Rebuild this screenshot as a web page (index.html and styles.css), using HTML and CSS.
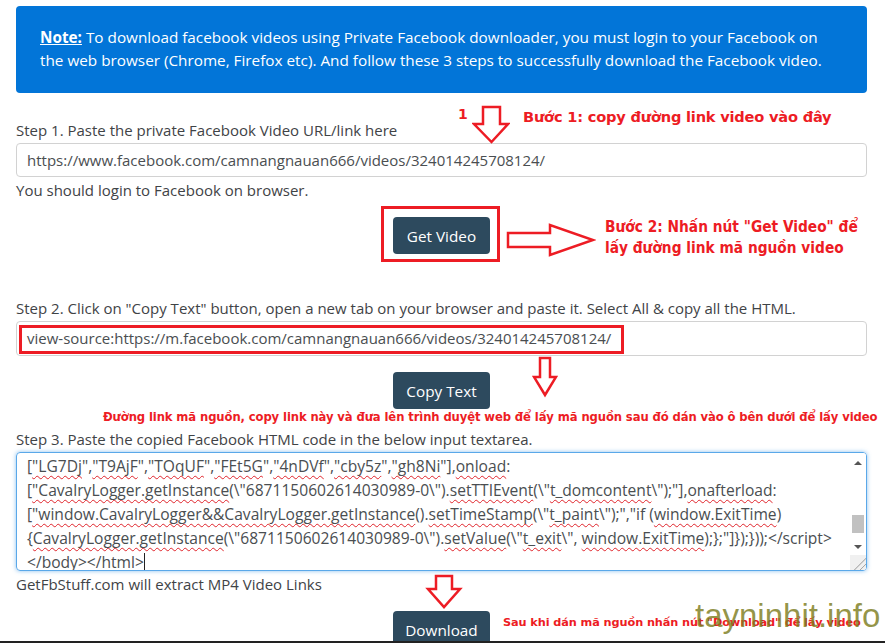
FILE: index.html
```html
<!DOCTYPE html>
<html lang="en">
<head>
    <meta charset="UTF-8">
    <meta name="viewport" content="width=device-width, initial-scale=1.0">
    <title>Private Facebook Video Downloader</title>
    <link rel="stylesheet" href="styles.css">
</head>
<body>
    <div class="page">
        <div class="note">
            <strong class="note-title">Note:</strong> To download facebook videos using Private Facebook downloader, you must login to your Facebook on the web browser (Chrome, Firefox etc). And follow these 3 steps to successfully download the Facebook video.
        </div>

        <!-- Step 1 -->
        <div class="step step-one">
            <label class="step-label">Step 1. Paste the private Facebook Video URL/link here</label>
            <div class="field">https://www.facebook.com/camnangnauan666/videos/324014245708124/</div>
            <p class="help">You should login to Facebook on browser.</p>
            <div class="actions">
                <span class="btn-mark"><button class="btn">Get Video</button></span>
            </div>

            <span class="hint-num">1</span>
            <svg class="arrow arrow-down-1" width="38" height="40" viewBox="0 0 38 40">
                <polygon points="11,2 28,2 28,19 36,19 19.5,37 2,19 11,19" />
            </svg>
            <span class="hint hint-one">Bước 1: copy đường link video vào đây</span>

            <svg class="arrow arrow-right" width="90" height="34" viewBox="0 0 90 34">
                <polygon points="2,10 44,10 44,2 87,17 44,32 44,24 2,24" />
            </svg>
            <span class="hint hint-two">Bước 2: Nhấn nút "Get Video" để<br>lấy đường link mã nguồn video</span>
        </div>

        <!-- Step 2 -->
        <div class="step step-two">
            <label class="step-label">Step 2. Click on "Copy Text" button, open a new tab on your browser and paste it. Select All &amp; copy all the HTML.</label>
            <div class="field field-tall">
                view-source:https://m.facebook.com/camnangnauan666/videos/324014245708124/
                <span class="url-mark"></span>
            </div>
            <div class="actions">
                <button class="btn">Copy Text</button>
            </div>

            <svg class="arrow arrow-down-2" width="26" height="42" viewBox="0 0 26 42">
                <polygon points="8,2 18,2 18,21 24,21 13,39 2,21 8,21" />
            </svg>
            <span class="hint hint-three">Đường link mã nguồn, copy link này và đưa lên trình duyệt web để lấy mã nguồn sau đó dán vào ô bên dưới để lấy video</span>
        </div>

        <!-- Step 3 -->
        <div class="step step-three">
            <label class="step-label">Step 3. Paste the copied Facebook HTML code in the below input textarea.</label>
            <div class="code-box">
                <div class="code-lines">
                    <div>[<u>"LG7Dj</u>",<u>"T9AjF</u>",<u>"TOqUF</u>",<u>"FEt5G</u>",<u>"4nDVf</u>",<u>"cby5z</u>",<u>"gh8Ni</u>"],<u>onload</u>:</div>
                    <div>[<u>"CavalryLogger.getInstance</u>(\"6871150602614030989-0\").<u>setTTIEvent</u>(\"<u>t_domcontent</u>\");"],<u>onafterload</u>:</div>
                    <div>[<u>"window.CavalryLogger&amp;&amp;CavalryLogger.getInstance</u>().<u>setTimeStamp</u>(\"<u>t_paint</u>\");","if (<u>window.ExitTime</u>)</div>
                    <div>{<u>CavalryLogger.getInstance</u>(\"6871150602614030989-0\").<u>setValue</u>(\"<u>t_exit</u>\", <u>window.ExitTime</u>);};"]});}));&lt;/script&gt;</div>
                    <div>&lt;/body&gt;&lt;/html&gt;<span class="caret"></span></div>
                </div>
                <div class="scrollbar">
                    <span class="sb-up"></span>
                    <span class="sb-track"><span class="sb-thumb"></span></span>
                    <span class="sb-down"></span>
                    <span class="sb-corner"></span>
                </div>
            </div>
            <p class="help">GetFbStuff.com will extract MP4 Video Links</p>
            <div class="actions">
                <button class="btn">Download</button>
            </div>

            <svg class="arrow arrow-down-3" width="38" height="36" viewBox="0 0 38 36">
                <polygon points="11,2 27,2 27,15 35,15 19,33 3,15 11,15" />
            </svg>
            <span class="hint hint-four">Sau khi dán mã nguồn nhấn nút "Download" để lấy video</span>
        </div>
    </div>

    <div class="watermark">tayninhit.info</div>
    <div class="screen-edge"></div>
</body>
</html>
```

FILE: styles.css
```css
* {
    margin: 0;
    padding: 0;
    box-sizing: border-box;
}

body {
    background: #fff;
    color: #3f4346;
    font-family: 'Open Sans', 'Noto Sans', sans-serif;
    font-size: 15px;
    overflow: hidden;
}

.page {
    padding: 6px 18px 0 16px;
}

.note {
    background-color: #0275d8;
    color: #fff;
    border-radius: 4px;
    padding: 20px 24px 21px;
    line-height: 23px;
    font-size: 15.3px;
}

.note-title {
    text-decoration: underline;
}

.step {
    position: relative;
}

.step-one {
    margin-top: 26px;
}

.step-two {
    margin-top: 43px;
}

.step-three {
    margin-top: 19px;
}

.step-label {
    display: block;
    line-height: 22px;
    margin-bottom: 2px;
}

.field {
    position: relative;
    height: 34px;
    line-height: 32px;
    padding: 0 10px;
    border: 1px solid #d2d2d2;
    border-radius: 4px;
    color: #4a4e51;
    white-space: nowrap;
}

.field-tall {
    height: 35px;
    line-height: 33px;
}

.url-mark {
    position: absolute;
    left: 2px;
    top: 3px;
    width: 605px;
    height: 29px;
    border: 3px solid #ed1c24;
}

.help {
    line-height: 22px;
    margin-top: 2px;
}

.actions {
    display: flex;
    justify-content: center;
    margin-top: 16px;
}

.btn {
    height: 37px;
    min-width: 97px;
    padding: 0 12px;
    background-color: #2d4a5e;
    color: #fff;
    border: none;
    border-radius: 4px;
    font-family: inherit;
    font-size: 15.3px;
}

.btn-mark {
    display: flex;
    margin: -11px -10px -8px -12px;
    padding: 8px 7px 5px 9px;
    border: 3px solid #ed1c24;
}

/* code textarea */
.code-box {
    display: flex;
    height: 119px;
    margin-top: 1px;
    border: 1px solid #5aa8e9;
    border-radius: 4px;
    box-shadow: 0 0 4px rgba(90, 168, 233, 0.7);
    overflow: hidden;
}

.code-lines {
    flex: 1;
    padding: 1px 10px;
    line-height: 24px;
    font-size: 15.6px;
    color: #4a4e51;
    white-space: nowrap;
    overflow: hidden;
}

.code-lines u {
    text-decoration: underline wavy #e0242b;
    text-decoration-thickness: 1px;
    text-underline-offset: 3px;
    text-decoration-skip-ink: none;
}

.caret {
    display: inline-block;
    width: 1px;
    height: 19px;
    background: #222;
    vertical-align: -4px;
}

.scrollbar {
    width: 16px;
    display: flex;
    flex-direction: column;
    align-items: center;
    background: #fff;
}

.sb-up,
.sb-down {
    width: 0;
    height: 0;
    border-left: 4px solid transparent;
    border-right: 4px solid transparent;
}

.sb-up {
    margin-top: 8px;
    border-bottom: 4px solid #555;
}

.sb-track {
    flex: 1;
    width: 100%;
    display: flex;
    justify-content: center;
    padding-top: 50px;
}

.sb-thumb {
    width: 12px;
    height: 18px;
    background: #c1c1c1;
}

.sb-down {
    margin: 6px 0 6px;
    border-top: 4px solid #555;
}

.sb-corner {
    width: 100%;
    height: 15px;
    background: linear-gradient(135deg, #f0f0f0 60%, #999 62%, #f0f0f0 66%, #f0f0f0 78%, #999 80%, #f0f0f0 84%);
}

/* red annotations */
.arrow {
    position: absolute;
}

.arrow polygon {
    fill: #fff;
    stroke: #ed1c24;
    stroke-width: 2.5;
    stroke-linejoin: miter;
}

.hint,
.hint-num {
    position: absolute;
    color: #ed1c24;
    font-family: 'DejaVu Sans', Verdana, sans-serif;
    font-weight: bold;
    white-space: nowrap;
}

.hint-num {
    left: 442px;
    top: -13px;
    font-size: 14px;
}

.arrow-down-1 {
    left: 456px;
    top: -14px;
}

.hint-one {
    left: 507px;
    top: -11px;
    font-size: 14.6px;
    letter-spacing: -0.2px;
}

.arrow-right {
    left: 490px;
    top: 104px;
}

.hint-two {
    left: 589px;
    top: 98px;
    font-family: 'DejaVu Sans Condensed', 'DejaVu Sans', sans-serif;
    font-stretch: condensed;
    font-size: 15.3px;
    line-height: 21px;
}

.arrow-down-2 {
    left: 516px;
    top: 59px;
}

.hint-three {
    left: 87px;
    top: 113px;
    font-size: 11.6px;
    letter-spacing: -0.1px;
}

.arrow-down-3 {
    left: 409px;
    top: 146px;
}

.hint-four {
    left: 487px;
    top: 188px;
    font-size: 11.3px;
    letter-spacing: -0.1px;
}

.watermark {
    position: absolute;
    left: 695px;
    top: 597px;
    font-family: 'Liberation Sans', Arial, sans-serif;
    font-size: 33px;
    color: rgba(125, 125, 30, 0.82);
}

.screen-edge {
    position: fixed;
    left: 0;
    right: 0;
    bottom: 0;
    height: 2px;
    background: #222;
}
```
